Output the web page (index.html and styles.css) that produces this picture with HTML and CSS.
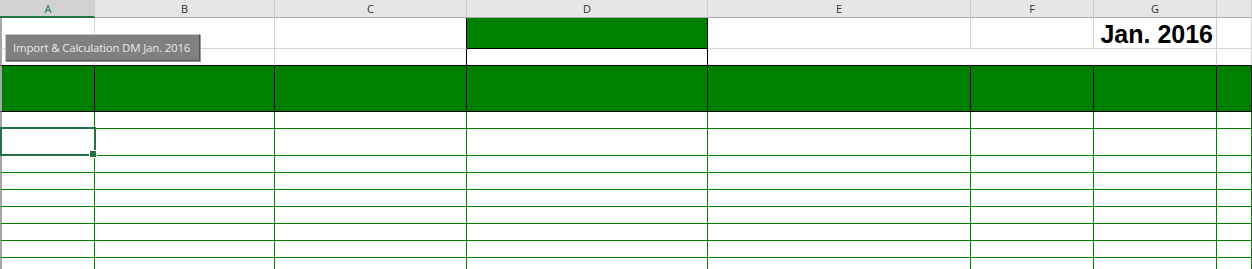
FILE: index.html
```html
<!DOCTYPE html>
<html lang="en">
<head>
  <meta charset="UTF-8" />
  <title>DM Jan. 2016</title>
  <link rel="stylesheet" href="styles.css">
</head>
<body>

  <div class="sheet">
    <div class="row heads">
      <div class="cell head active">A</div>
      <div class="cell head">B</div>
      <div class="cell head">C</div>
      <div class="cell head">D</div>
      <div class="cell head">E</div>
      <div class="cell head">F</div>
      <div class="cell head">G</div>
      <div class="cell head"></div>
    </div>

    <!-- title rows -->
    <div class="row r-title">
      <div class="cell"></div>
      <div class="cell"></div>
      <div class="cell edge"></div>
      <div class="cell fill boxed"></div>
      <div class="cell"></div>
      <div class="cell"></div>
      <div class="cell month">Jan. 2016</div>
      <div class="cell"></div>
    </div>
    <div class="row r-gap">
      <div class="cell"></div>
      <div class="cell"></div>
      <div class="cell edge"></div>
      <div class="cell boxed"></div>
      <div class="cell plain"></div>
      <div class="cell plain"></div>
      <div class="cell"></div>
      <div class="cell"></div>
    </div>

    <!-- table head -->
    <div class="row r-head">
      <div class="cell"></div><div class="cell"></div><div class="cell"></div><div class="cell"></div>
      <div class="cell"></div><div class="cell"></div><div class="cell"></div><div class="cell"></div>
    </div>

    <!-- table body -->
    <div class="row r-body">
      <div class="cell"></div><div class="cell"></div><div class="cell"></div><div class="cell"></div>
      <div class="cell"></div><div class="cell"></div><div class="cell"></div><div class="cell"></div>
    </div>
    <div class="row r-body tall">
      <div class="cell selected"><span class="handle"></span></div><div class="cell"></div><div class="cell"></div><div class="cell"></div>
      <div class="cell"></div><div class="cell"></div><div class="cell"></div><div class="cell"></div>
    </div>
    <div class="row r-body">
      <div class="cell"></div><div class="cell"></div><div class="cell"></div><div class="cell"></div>
      <div class="cell"></div><div class="cell"></div><div class="cell"></div><div class="cell"></div>
    </div>
    <div class="row r-body">
      <div class="cell"></div><div class="cell"></div><div class="cell"></div><div class="cell"></div>
      <div class="cell"></div><div class="cell"></div><div class="cell"></div><div class="cell"></div>
    </div>
    <div class="row r-body">
      <div class="cell"></div><div class="cell"></div><div class="cell"></div><div class="cell"></div>
      <div class="cell"></div><div class="cell"></div><div class="cell"></div><div class="cell"></div>
    </div>
    <div class="row r-body">
      <div class="cell"></div><div class="cell"></div><div class="cell"></div><div class="cell"></div>
      <div class="cell"></div><div class="cell"></div><div class="cell"></div><div class="cell"></div>
    </div>
    <div class="row r-body">
      <div class="cell"></div><div class="cell"></div><div class="cell"></div><div class="cell"></div>
      <div class="cell"></div><div class="cell"></div><div class="cell"></div><div class="cell"></div>
    </div>
    <div class="row r-body">
      <div class="cell"></div><div class="cell"></div><div class="cell"></div><div class="cell"></div>
      <div class="cell"></div><div class="cell"></div><div class="cell"></div><div class="cell"></div>
    </div>
    <div class="row r-body">
      <div class="cell"></div><div class="cell"></div><div class="cell"></div><div class="cell"></div>
      <div class="cell"></div><div class="cell"></div><div class="cell"></div><div class="cell"></div>
    </div>

    <button class="macro-btn">Import &amp; Calculation DM Jan. 2016</button>
  </div>

</body>
</html>
```

FILE: styles.css
```css
body {
  margin: 0;
  padding: 0;
  background: #fff;
  font-family: "Open Sans", "Noto Sans", sans-serif;
  overflow: hidden;
}

.sheet {
  position: relative;
  width: 1252px;
  height: 269px;
  overflow: hidden;
}

.row {
  display: grid;
  grid-template-columns: 95px 180px 192px 241px 263px 123px 123px 1fr;
}

.cell {
  box-sizing: border-box;
  border-right: 1px solid #d4d4d4;
  border-bottom: 1px solid #d4d4d4;
}

.row .cell:first-child {
  border-left: 2px solid #a6a6a6;
}

/* column headers */
.heads .cell {
  height: 18px;
  background: #e6e6e6;
  border-right: 1px solid #cdcdcd;
  border-bottom: 1px solid #ababab;
  font-size: 11px;
  line-height: 17px;
  text-align: center;
  color: #333;
}

.heads .cell:first-child {
  border-left: none;
  padding-left: 2px;
}

.heads .active {
  background: #d2d2d2;
  color: #217346;
  border-bottom: 2px solid #217346;
}

/* title area */
.r-title .cell {
  height: 31px;
}

.r-gap .cell {
  height: 17px;
  border-bottom-color: #000;
}

.r-gap .plain {
  border-right-color: #fff;
}

.cell.edge {
  border-right-color: #000;
}

.cell.boxed {
  border-right-color: #000;
  border-bottom-color: #000;
}

.cell.fill {
  background: #008000;
}

.month {
  display: flex;
  justify-content: flex-end;
  align-items: flex-end;
  padding-right: 3px;
  font-family: "Liberation Sans", Arial, sans-serif;
  font-weight: bold;
  font-size: 25px;
  line-height: 28px;
  color: #000;
}

/* green table */
.r-head .cell {
  height: 46px;
  background: #008000;
  border-right-color: #000;
  border-bottom-color: #000;
}

.r-body .cell {
  height: 17px;
  border-right-color: #008000;
  border-bottom-color: #008000;
}

.r-body.tall .cell {
  height: 27px;
}

.cell.selected {
  position: relative;
}

.selected::after {
  content: "";
  position: absolute;
  left: -2px;
  top: -2px;
  width: 96px;
  height: 29px;
  box-sizing: border-box;
  border: 2px solid #217346;
}

.handle {
  position: absolute;
  right: -3px;
  bottom: -3px;
  width: 6px;
  height: 6px;
  background: #217346;
  border: 1px solid #fff;
  z-index: 2;
}

/* macro button */
.macro-btn {
  position: absolute;
  left: 5px;
  top: 34px;
  width: 195px;
  height: 27px;
  margin: 0;
  padding: 0 0 0 7px;
  text-align: left;
  white-space: nowrap;
  background: #808080;
  color: #e8e8e8;
  font-family: "Open Sans", "Noto Sans", sans-serif;
  font-size: 11.5px;
  letter-spacing: -0.2px;
  border: 1px solid #c8c8c8;
  border-right-color: #555;
  border-bottom-color: #555;
  box-shadow: 1px 1px 0 #9a9a9a;
}
```
